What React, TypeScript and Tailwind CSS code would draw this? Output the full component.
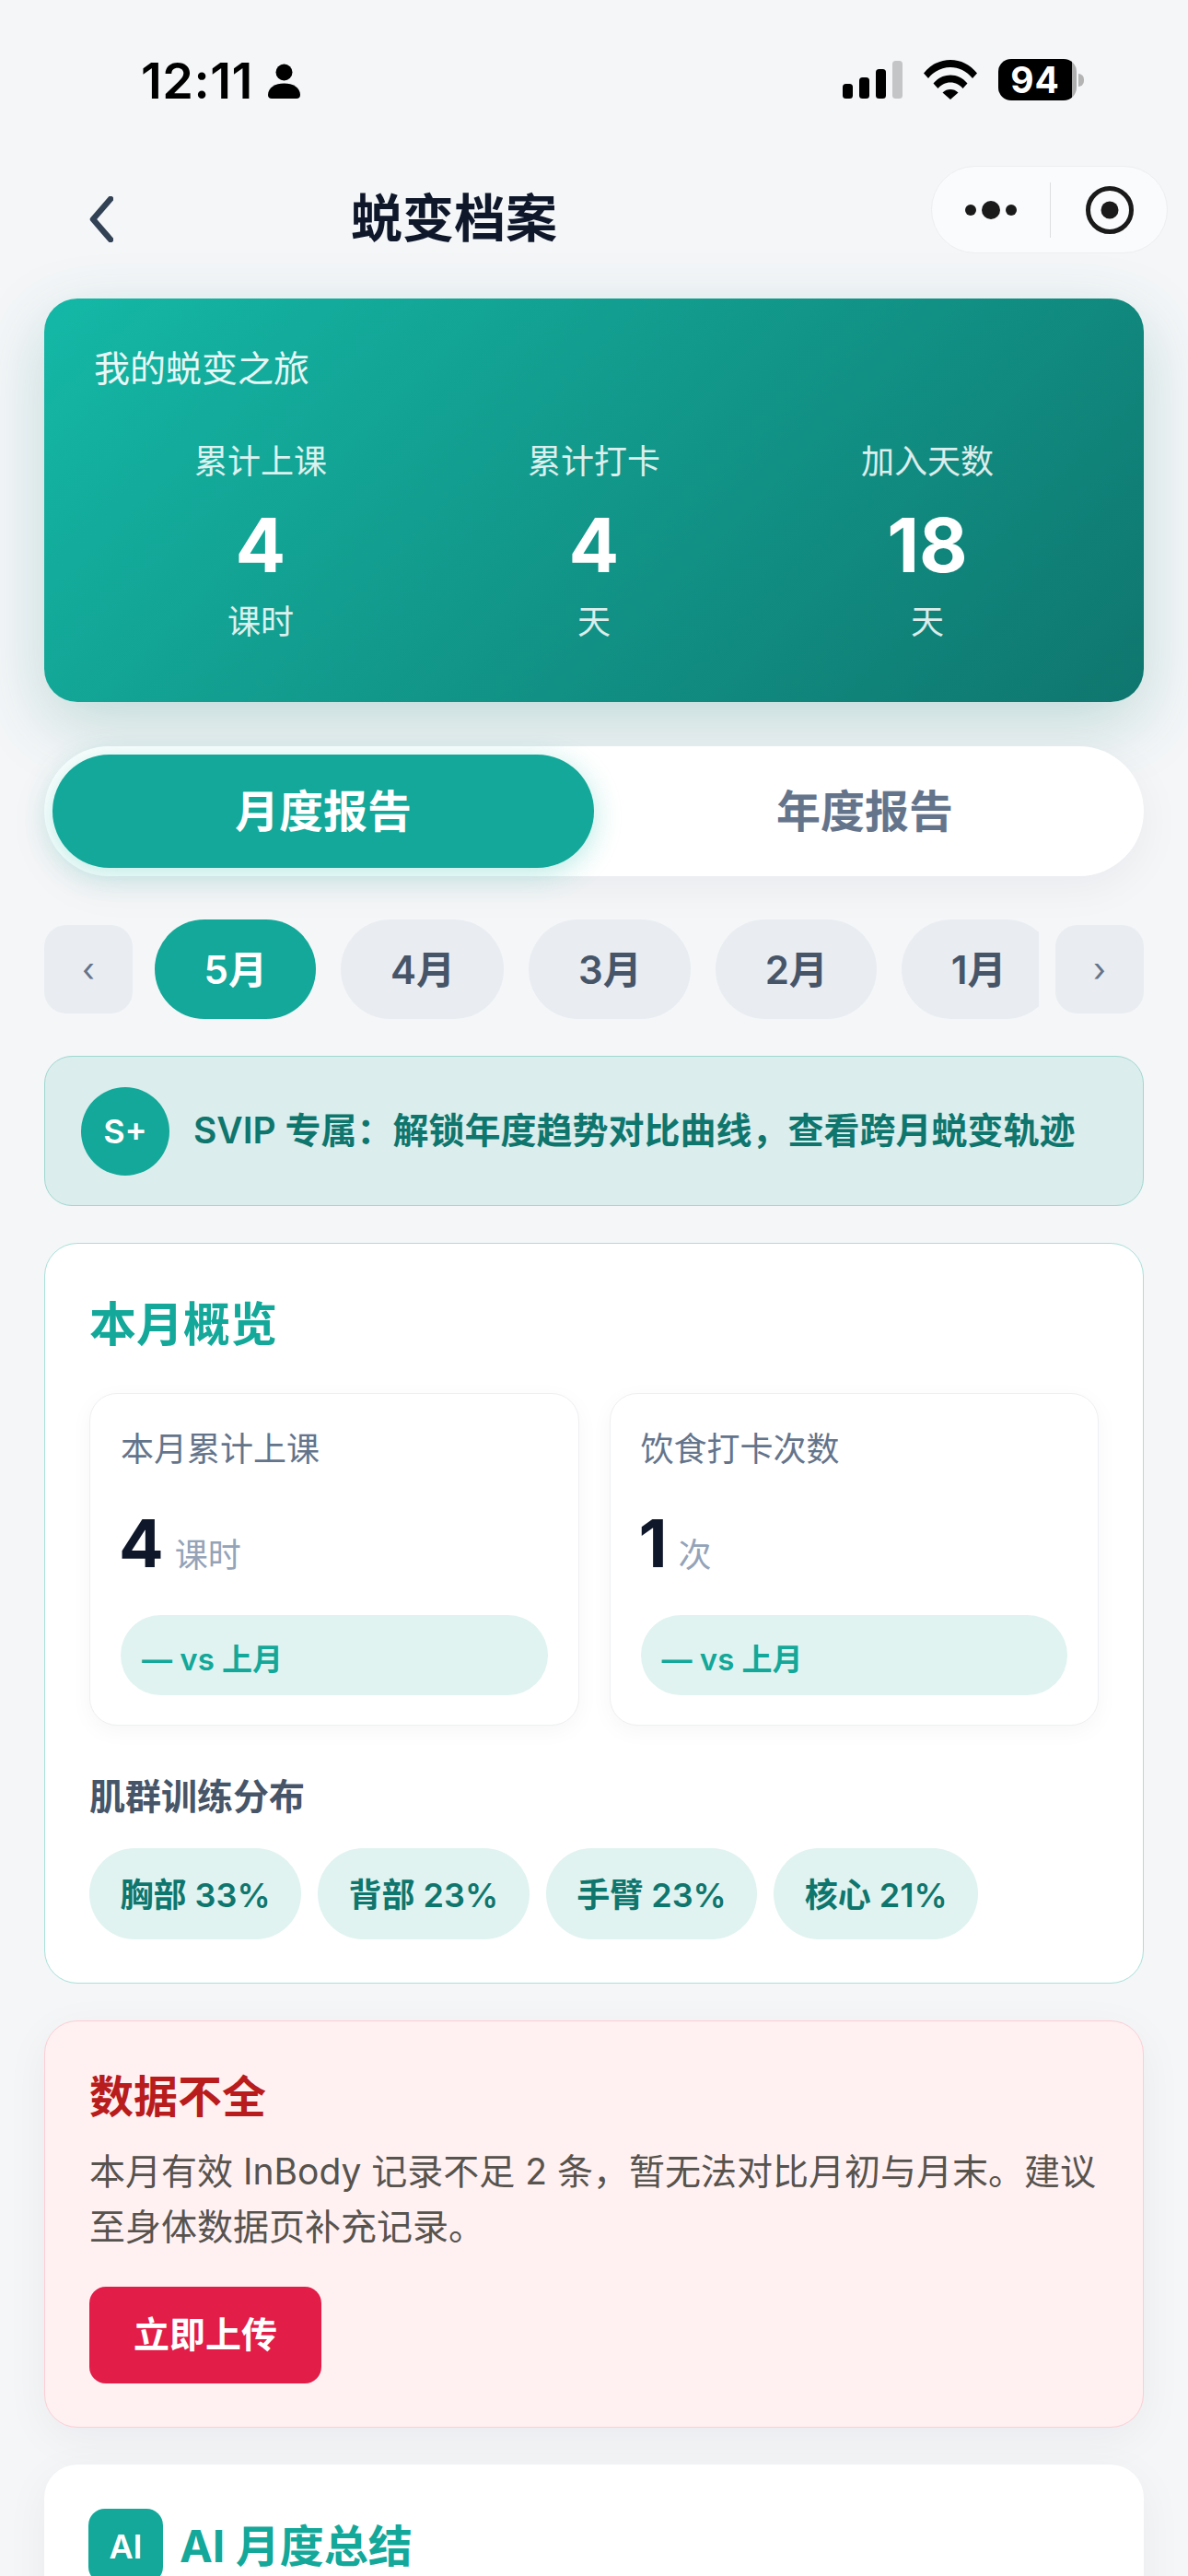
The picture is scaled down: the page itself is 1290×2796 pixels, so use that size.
import React from 'react';

const months = ['5月', '4月', '3月', '2月', '1月'];
const muscles = ['胸部 33%', '背部 23%', '手臂 23%', '核心 21%'];
const heroStats = [
  { label: '累计上课', value: '4', unit: '课时' },
  { label: '累计打卡', value: '4', unit: '天' },
  { label: '加入天数', value: '18', unit: '天' },
];
const overview = [
  { label: '本月累计上课', value: '4', unit: '课时' },
  { label: '饮食打卡次数', value: '1', unit: '次' },
];

function StatusBar() {
  return (
    <div className="flex h-[180px] items-start pl-[153px] pr-[113px] pt-[60px]">
      <span className="text-[54px] font-semibold leading-[56px] tracking-[0.5px] text-black">12:11</span>
      <svg className="ml-[16px] mt-[9px]" width="35" height="38" viewBox="0 0 35 38">
        <circle cx="17.5" cy="9.5" r="9" fill="#000" />
        <path d="M0 34c0-8 8-12.500 17.500-12.500S35 26 35 34c0 2.500-1.500 4-4 4H4c-2.500 0-4-1.500-4-4z" fill="#000" />
      </svg>
      <div className="ml-auto flex items-start">
        {/* Signal */}
        <svg className="mt-[6px]" width="66" height="41" viewBox="0 0 66 41">
          <rect x="0" y="25" width="11" height="16" rx="3.500" fill="#000" />
          <rect x="18" y="18" width="11" height="23" rx="3.500" fill="#000" />
          <rect x="36" y="9" width="11" height="32" rx="3.500" fill="#000" />
          <rect x="54" y="0" width="11" height="41" rx="3.500" fill="#c4c5c7" />
        </svg>
        {/* Wifi */}
        <svg className="ml-[22px] mt-[5px]" width="58" height="43" viewBox="0 0 58 43">
          <path d="M0 14.500C7.500 5 18 0 29 0s21.500 5 29 14.500l-5 5.500C46.500 12 38 8 29 8S11.500 12 5 20z" fill="#000" />
          <path d="M10.500 25.500C15.500 19.500 22 16.500 29 16.500s13.500 3 18.500 9l-5 5.500C39 27 34.500 24.500 29 24.500S19 27 15.500 31z" fill="#000" />
          <path d="M20.500 35.500C23 33 26 32 29 32s6 1 8.500 3.500L29 43z" fill="#000" />
        </svg>
        {/* Battery */}
        <div className="ml-[23px] mt-[4px] flex items-center">
          <div className="flex h-[45px] w-[85px] items-center justify-center overflow-hidden rounded-[14px] bg-[linear-gradient(90deg,#000_94%,#adadad_94%)] pr-[5px] text-[39px] font-bold leading-none tracking-[1px] text-white">
            94
          </div>
          <div className="ml-[2px] h-[14px] w-[6px] rounded-r-full bg-[#b4b4b4]" />
        </div>
      </div>
    </div>
  );
}

function NavBar() {
  return (
    <div className="flex h-[95px] items-center pl-[97px] pr-[22px]">
      <svg className="mt-[20px]" width="26" height="50" viewBox="0 0 26 50" fill="none">
        <path d="M23 3L4 25l19 22" stroke="#334155" strokeWidth="6.500" strokeLinecap="round" strokeLinejoin="round" />
      </svg>
      <h1 className="ml-[258px] mt-[18px] text-[56px] font-bold leading-[72px] text-[#0f172a]">蜕变档案</h1>
      <div className="ml-auto flex h-[95px] w-[257px] items-center rounded-full border border-[#eceef1] bg-[#fafbfc]">
        <svg className="ml-[36px]" width="62" height="22" viewBox="0 0 62 22">
          <circle cx="6" cy="11" r="6" fill="#1a1a1a" />
          <circle cx="28" cy="11" r="10" fill="#1a1a1a" />
          <circle cx="50" cy="11" r="6" fill="#1a1a1a" />
        </svg>
        <div className="ml-[30px] h-[60px] w-px bg-[#dedfe1]" />
        <svg className="ml-[37px]" width="54" height="54" viewBox="0 0 54 54" fill="none">
          <circle cx="27" cy="27" r="23.500" stroke="#1a1a1a" strokeWidth="5" />
          <circle cx="27" cy="27" r="9.500" fill="#1a1a1a" />
        </svg>
      </div>
    </div>
  );
}

function HeroCard() {
  return (
    <section className="mt-[49px] rounded-[36px] bg-[linear-gradient(135deg,#14b8a6,#0f766e)] px-[54px] pb-[60px] pt-[49px] text-white shadow-[0_24px_72px_rgba(15,118,110,0.22)]">
      <p className="text-[39px] leading-[54px] text-white/90">我的蜕变之旅</p>
      <div className="mt-[47px] grid grid-cols-3 text-center">
        {heroStats.map((s) => (
          <div key={s.label}>
            <p className="text-[36px] leading-[54px] text-white/85">{s.label}</p>
            <p className="mt-[16px] text-[81px] font-bold leading-[96px]">{s.value}</p>
            <p className="mt-[8px] text-[36px] leading-[54px] text-white/85">{s.unit}</p>
          </div>
        ))}
      </div>
    </section>
  );
}

function ReportTabs() {
  return (
    <div className="mt-[48px] grid h-[141px] grid-cols-2 rounded-full bg-white p-[9px] shadow-[0_12px_48px_rgba(15,23,42,0.05)]">
      <div className="flex items-center justify-center rounded-full bg-[#13a899] text-[48px] font-semibold text-white shadow-[0_6px_30px_rgba(20,184,166,0.3)]">
        月度报告
      </div>
      <div className="flex items-center justify-center text-[48px] font-semibold text-[#64748b]">年度报告</div>
    </div>
  );
}

function MonthPicker() {
  return (
    <div className="mt-[47px] flex items-center">
      <div className="flex h-[96px] w-[96px] shrink-0 items-center justify-center rounded-[24px] bg-[#e9ecf1] text-[36px] text-[#64748b]">‹</div>
      <div className="ml-[24px] mr-[18px] flex flex-1 gap-[27px] overflow-hidden">
        {months.map((m, i) => (
          <div
            key={m}
            className={
              i === 0
                ? 'flex h-[108px] shrink-0 items-center rounded-full bg-[#13a899] px-[53.5px] text-[42px] font-semibold text-white'
                : 'flex h-[108px] shrink-0 items-center rounded-full bg-[#e9ecf1] px-[53.5px] text-[42px] font-semibold text-[#475569]'
            }
          >
            {m}
          </div>
        ))}
      </div>
      <div className="flex h-[96px] w-[96px] shrink-0 items-center justify-center rounded-[24px] bg-[#e9ecf1] text-[36px] text-[#64748b]">›</div>
    </div>
  );
}

function SvipBanner() {
  return (
    <div className="mt-[40px] flex h-[163px] items-center gap-[26px] rounded-[30px] border border-[#9fd8d0] bg-[#dbeded] pl-[39px]">
      <div className="flex h-[96px] w-[96px] items-center justify-center rounded-full bg-[#13a899] text-[36px] font-semibold text-white">S+</div>
      <p className="text-[39px] font-semibold text-[#0f766e]">SVIP 专属：解锁年度趋势对比曲线，查看跨月蜕变轨迹</p>
    </div>
  );
}

function Overview() {
  return (
    <section className="mt-[40px] rounded-[36px] border border-[#a8e0d8] bg-white px-[48px] pb-[47px] pt-[52px]">
      <h2 className="text-[51px] font-bold leading-[72px] text-[#13a899]">本月概览</h2>
      <div className="mt-[38px] grid grid-cols-2 gap-[33px]">
        {overview.map((o) => (
          <div key={o.label} className="h-[361px] rounded-[30px] border border-[#eeeff2] bg-white px-[33px] pt-[33px] shadow-[0_6px_24px_rgba(15,23,42,0.04)]">
            <p className="text-[36px] leading-[54px] text-[#64748b]">{o.label}</p>
            <div className="mt-[27px] flex items-baseline gap-[12px]">
              <span className="-ml-[2px] text-[72px] font-bold leading-[96px] text-[#0f172a]">{o.value}</span>
              <span className="text-[36px] text-[#94a3b8]">{o.unit}</span>
            </div>
            <div className="mt-[30px] flex h-[87px] items-center rounded-full bg-[#e0f3f0] pl-[23px] pt-[10px] text-[33px] font-semibold text-[#13a899]">— vs 上月</div>
          </div>
        ))}
      </div>
      <h3 className="mt-[50px] text-[39px] font-semibold leading-[54px] text-[#475569]">肌群训练分布</h3>
      <div className="mt-[29px] flex gap-[18px]">
        {muscles.map((m) => (
          <div key={m} className="flex h-[99px] items-center rounded-full bg-[#e0f3f0] px-[33.5px] pt-[3px] text-[36px] font-semibold text-[#0f766e]">{m}</div>
        ))}
      </div>
    </section>
  );
}

function DataWarning() {
  return (
    <section className="mt-[40px] rounded-[36px] border border-[#fecdd3] bg-[#fff1f2] px-[48px] pb-[47px] pt-[49px] shadow-[0_12px_48px_rgba(15,23,42,0.05)]">
      <h2 className="text-[48px] font-bold leading-[66px] text-[#b91c1c]">数据不全</h2>
      <p className="mt-[18px] text-[39px] leading-[60px] text-[#57534e]">本月有效 InBody 记录不足 2 条，暂无法对比月初与月末。建议至身体数据页补充记录。</p>
      <div className="mt-[35px] flex h-[105px] w-[252px] items-center justify-center rounded-[18px] bg-[#e11d48] text-[39px] font-semibold text-white">立即上传</div>
    </section>
  );
}

function AiSummary() {
  return (
    <section className="mt-[40px] h-[300px] rounded-t-[36px] bg-white px-[48px] pt-[48px] shadow-[0_12px_48px_rgba(15,23,42,0.05)]">
      <div className="flex items-center gap-[18px]">
        <div className="flex h-[81px] w-[81px] items-center justify-center rounded-[18px] bg-[#13a899] text-[36px] font-semibold text-white">AI</div>
        <h2 className="text-[48px] font-bold text-[#13a899]">AI 月度总结</h2>
      </div>
    </section>
  );
}

export default function App() {
  return (
    <div className="h-[2796px] overflow-hidden bg-[#f4f6f8] [font-family:Inter,'Noto_Sans_CJK_SC',sans-serif]">
      <StatusBar />
      <NavBar />
      <main className="px-[48px]">
        <HeroCard />
        <ReportTabs />
        <MonthPicker />
        <SvipBanner />
        <Overview />
        <DataWarning />
        <AiSummary />
      </main>
    </div>
  );
}
